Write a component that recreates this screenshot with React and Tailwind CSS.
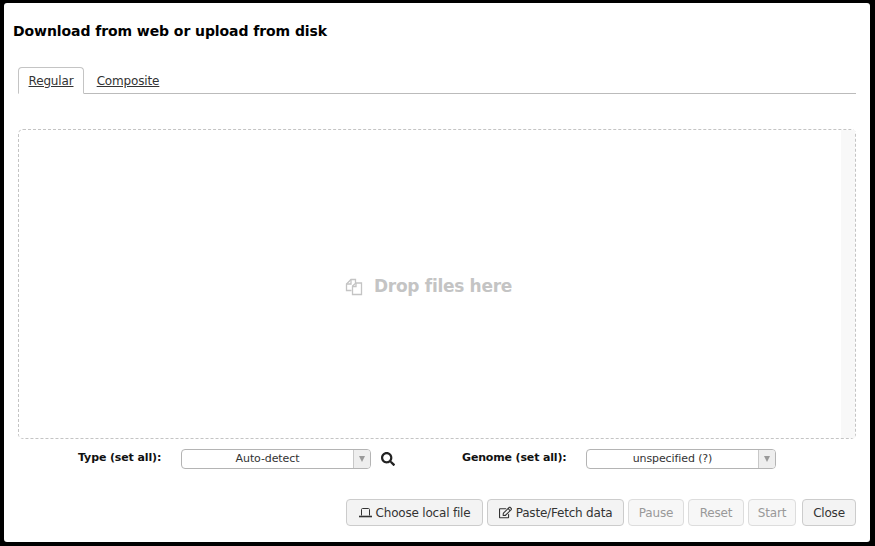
import React from 'react';
import { FaRegEdit, FaSearch } from 'react-icons/fa';

const font = { fontFamily: '"DejaVu Sans", sans-serif' };

function FilesIcon() {
    return (
        <svg width="18" height="18" viewBox="0 0 18 18" fill="none" stroke="#c4c4c4" strokeWidth="1.3">
            <path d="M6.5 12.5H1.5V6L6 1.5H10.5V5" />
            <path d="M6 1.5V6H1.5" />
            <path d="M7.5 16.5V8L11 5H16.5V16.5Z" />
            <path d="M11 5V8.5H7.5" />
        </svg>
    );
}

function LaptopIcon() {
    return (
        <svg width="13" height="10" viewBox="0 0 13 10" fill="none" stroke="#333" strokeWidth="1">
            <path d="M2.5 7.5V1.5C2.5 1 2.8 .5 3.5 .5H9.5C10.2 .5 10.5 1 10.5 1.5V7.5" />
            <path d="M0 8.5H13" strokeWidth="1.6" />
        </svg>
    );
}

function Select({ value, width }) {
    return (
        <div className={`flex h-[20px] ${width} rounded-[4px] border border-[#b4b4b4] bg-white text-[11px] tracking-[-0.1px] text-[#333]`}>
            <div className="flex flex-1 items-center justify-center">{value}</div>
            <div className="flex w-[17px] items-center justify-center rounded-r-[3px] border-l border-[#c8c8c8] bg-[#eeeeee]">
                <div className="h-0 w-0 border-x-[3.5px] border-t-[6px] border-x-transparent border-t-[#999]" />
            </div>
        </div>
    );
}

function Btn({ children, disabled, width }) {
    return (
        <button className={`flex h-[27px] ${width} items-center justify-center gap-[4px] rounded-[4px] border text-[12px] tracking-[-0.2px] ${disabled ? 'border-[#dddddd] bg-[#f7f7f7] text-[#999]' : 'border-[#cccccc] bg-[#f3f3f3] text-[#333]'}`}>
            {children}
        </button>
    );
}

export default function App() {
    return (
        <div className="h-[546px] w-[875px] overflow-hidden bg-black pb-[4px] pl-[4px] pr-[5px] pt-[3px]" style={font}>
            <div className="flex h-full flex-col rounded-[3px] bg-white pl-[9px] pr-[14px]">
                <h1 className="mt-[19px] h-[18px] text-[14px] font-bold leading-[18px] tracking-[-0.08px] text-black">Download from web or upload from disk</h1>

                <div className="ml-[5px] mt-[27px] flex h-[27px] border-b border-[#bbbbbb] text-[12px] tracking-[-0.15px] text-[#333]">
                    <div className="flex h-[27px] w-[66px] items-center justify-center rounded-t-[4px] border border-[#c4c4c4] border-b-white bg-white underline">Regular</div>
                    <div className="flex w-[88px] items-center justify-center pt-[2px] underline">Composite</div>
                </div>

                <div className="ml-[5px] mt-[35px] flex h-[310px] rounded-[5px] border border-dashed border-[#c4c4c4]">
                    <div className="flex flex-1 items-center justify-center gap-[11px] pr-[3px] pt-[6px] text-[#c4c4c4]">
                        <FilesIcon />
                        <span className="text-[17px] font-bold tracking-[-0.3px]">Drop files here</span>
                    </div>
                    <div className="w-[14px] bg-[#f8f8f8]" />
                </div>

                <div className="mt-[10px] flex h-[20px] items-center text-[#111]">
                    <span className="ml-[65px] w-[103px] pb-[1px] text-[11px] font-bold tracking-[-0.12px]">Type (set all):</span>
                    <Select value="Auto-detect" width="w-[190px]" />
                    <FaSearch className="ml-[10px] text-[14px] text-[#222]" />
                    <span className="ml-[67px] w-[124px] pb-[1px] text-[11px] font-bold tracking-[-0.15px]">Genome (set all):</span>
                    <Select value="unspecified (?)" width="w-[190px]" />
                </div>

                <div className="mt-[30px] flex justify-end gap-[4px]">
                    <Btn width="w-[137px]"><LaptopIcon /> Choose local file</Btn>
                    <Btn width="w-[137px]"><FaRegEdit className="text-[13px]" /> Paste/Fetch data</Btn>
                    <Btn disabled width="w-[56px]">Pause</Btn>
                    <Btn disabled width="w-[56px]">Reset</Btn>
                    <Btn disabled width="w-[48px]">Start</Btn>
                    <div className="ml-[2px]">
                        <Btn width="w-[54px]">Close</Btn>
                    </div>
                </div>
            </div>
        </div>
    );
}
